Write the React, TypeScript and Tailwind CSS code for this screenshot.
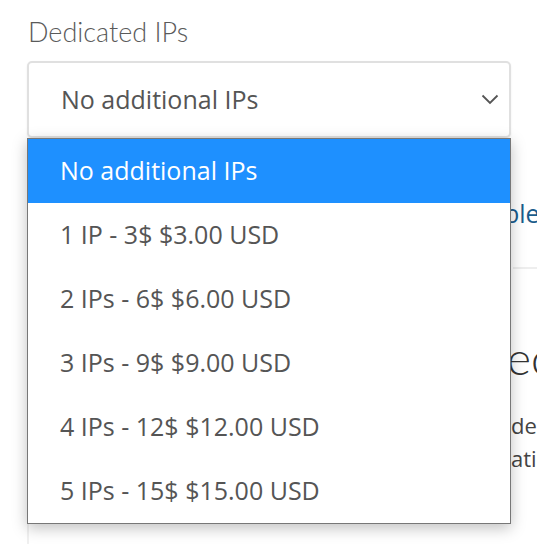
import React from "react";

const options = [
  "No additional IPs",
  "1 IP - 3$ $3.00 USD",
  "2 IPs - 6$ $6.00 USD",
  "3 IPs - 9$ $9.00 USD",
  "4 IPs - 12$ $12.00 USD",
  "5 IPs - 15$ $15.00 USD",
];

export default function App() {
  return (
    <div className="relative h-[544px] w-[537px] overflow-hidden bg-white [font-family:'Open_Sans',sans-serif]">
      <div className="pl-[27px] pt-[15px]">
        <label className="block text-[27px] leading-[34px] font-light text-[#5a5a5a] [font-family:'Lato',sans-serif] pl-px">
          Dedicated IPs
        </label>
        <div className="mt-[12px] flex h-[77px] w-[484px] items-center justify-between rounded-[5px] border-2 border-[#e0e0e0] bg-white pl-[32px] pr-[10px] shadow-[0_1px_2px_rgba(0,0,0,0.08)]">
          <span className="text-[25px] text-[#555]">No additional IPs</span>
          <svg width="18" height="11" viewBox="0 0 18 11" fill="none">
            <path d="M1.5 1.5 L9 9 L16.5 1.5" stroke="#555" strokeWidth="1.8" />
          </svg>
        </div>
        {/* background panel behind the dropdown */}
        <div className="mt-[1px] h-[500px] w-[600px] border-l-2 border-[#f0f0f0] whitespace-nowrap">
          <div className="pt-[57px] pl-[475px] text-[25px] leading-[34px] text-[#1a5c8c]">ble</div>
          <div className="mt-[37px] ml-[484px] border-t-2 border-[#eee]"></div>
          <div className="pt-[64px] pl-[478px] text-[46px] leading-[50px] font-light text-[#333] [font-family:'Lato',sans-serif]">
            ec
          </div>
          <div className="pt-[26px] pl-[482px] text-[22px] leading-[33px] text-[#444]">
            <div>de</div>
            <div>ati</div>
          </div>
        </div>
      </div>

      <ul className="absolute left-[27px] top-[138px] w-[484px] border border-[#777] bg-white shadow-[0_4px_14px_rgba(0,0,0,0.25)]">
        {options.map((o, i) => (
          <li
            key={o}
            className={
              i === 0
                ? "flex h-[64px] items-center bg-[#1e90ff] pl-[32px] text-[25px] text-white"
                : "flex h-[64px] items-center pl-[32px] text-[25px] text-[#555]"
            }
          >
            {o}
          </li>
        ))}
      </ul>
    </div>
  );
}
